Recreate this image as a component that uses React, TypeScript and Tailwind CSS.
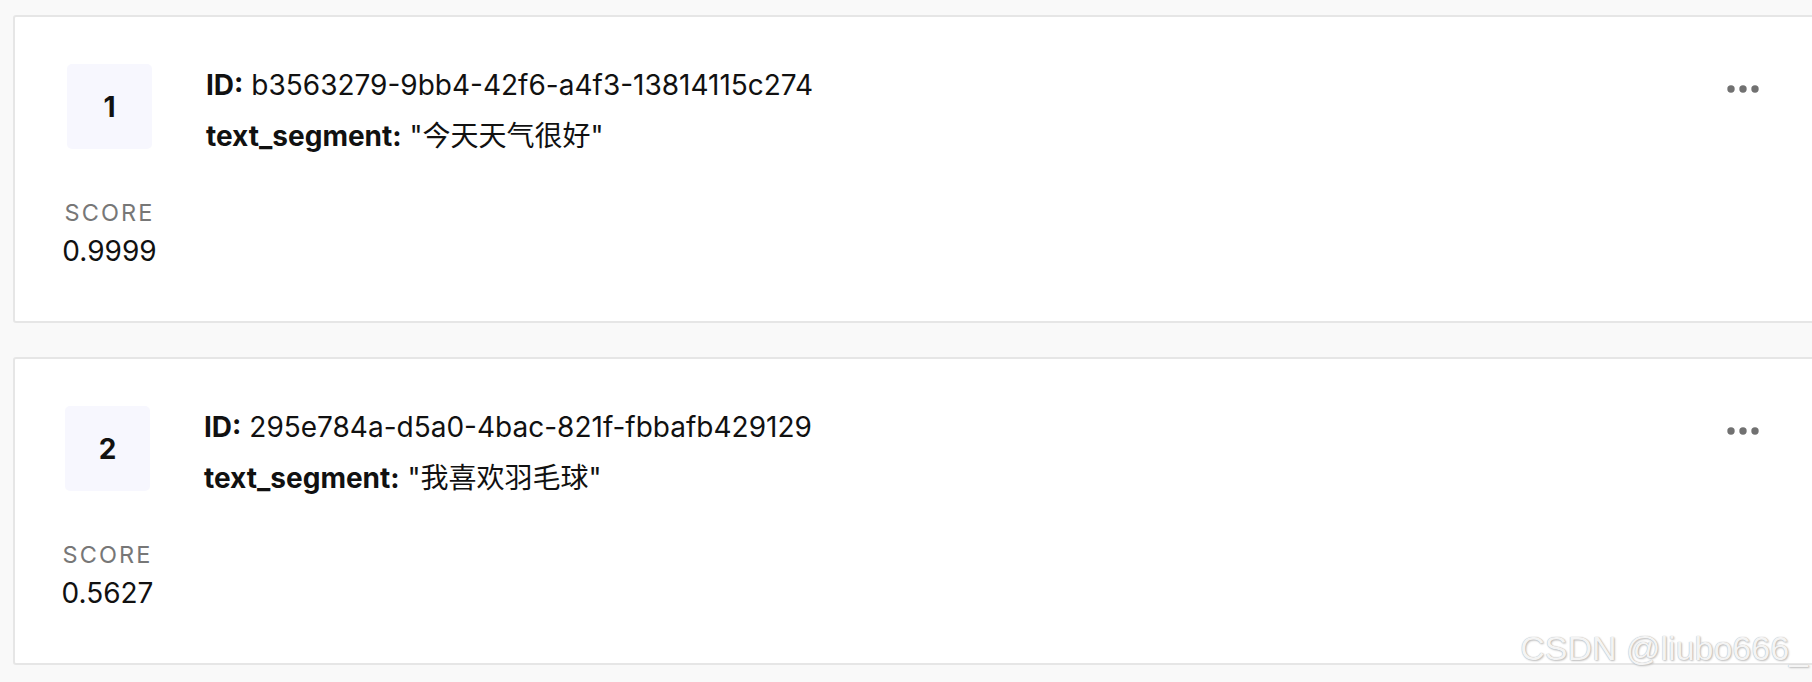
import React from "react";

const items = [
  { n: 1, id: "b3563279-9bb4-42f6-a4f3-13814115c274", seg: "今天天气很好", score: "0.9999" },
  { n: 2, id: "295e784a-d5a0-4bac-821f-fbbafb429129", seg: "我喜欢羽毛球", score: "0.5627" },
];

function Dots() {
  return (
    <svg width="32" height="8" viewBox="0 0 32 8" className="block">
      <circle cx="4" cy="4" r="3.7" fill="#717171" />
      <circle cx="16" cy="4" r="3.7" fill="#717171" />
      <circle cx="28" cy="4" r="3.7" fill="#717171" />
    </svg>
  );
}

function Card({ n, id, seg, score }: { n: number; id: string; seg: string; score: string }) {
  return (
    <div
      className={
        "h-[308px] bg-white border-2 border-[#e6e6e6] rounded-[3px] flex pt-[47px] pr-[92px] " +
        (n === 1 ? "pl-[52px]" : "pl-[50px]")
      }
    >
      <div className="flex flex-col items-center w-[85px] shrink-0">
        <div className="w-[85px] h-[85px] rounded-[5px] bg-[#f7f7fe] flex items-center justify-center text-[28px] font-bold text-[#111]">
          {n}
        </div>
        <div className="mt-[49px] text-[23.5px] leading-[30px] tracking-[0.09em] text-[#777] whitespace-nowrap">SCORE</div>
        <div className="mt-[6px] text-[28px] leading-[34px] text-[#111] whitespace-nowrap">{score}</div>
      </div>
      <div className="ml-[54px] flex flex-col text-[#111]">
        <div className="text-[28px] leading-[36px] mt-[3px] whitespace-nowrap">
          <span className="font-bold">ID:</span> {id}
        </div>
        <div className="text-[28px] leading-[36px] mt-[15px] whitespace-nowrap">
          <span className="font-bold">text_segment:</span> "{seg}"
        </div>
      </div>
      <div className="ml-auto pt-[21px]">
        <Dots />
      </div>
    </div>
  );
}

export default function App() {
  return (
    <div className="relative w-[1812px] h-[682px] overflow-hidden bg-[#f9f9f9] pt-[15px] pl-[13px] font-['Inter','Noto_Sans_CJK_SC',sans-serif]">
      <div className="flex flex-col gap-[34px] w-[1840px]">
        {items.map((it) => (
          <Card key={it.n} {...it} />
        ))}
      </div>
      <div className="absolute right-[4px] top-[628px] text-[34px] leading-[40px] text-[#f4f4f4] font-['Liberation_Sans',sans-serif] [text-shadow:0_0_1px_#a5a5a5,1px_1px_2px_#c0c0c0]">
        CSDN @liubo666_
      </div>
    </div>
  );
}
